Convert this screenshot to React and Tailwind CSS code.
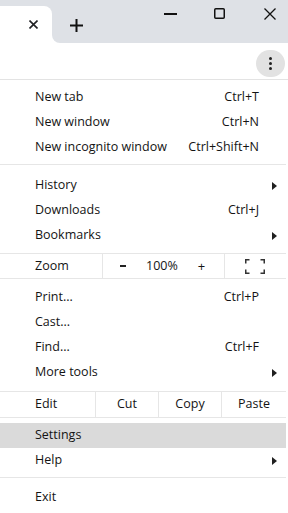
import React from "react";

const Arrow = () => (
  <svg width="5" height="8" viewBox="0 0 5 8" className="fill-[#202020]">
    <path d="M0 0 L5 4 L0 8 Z" />
  </svg>
);

const Row = ({ label, shortcut, arrow, active }) => (
  <div
    className={`flex h-[25px] items-center pl-[35px] pr-[27px] ${
      active ? "bg-[#dadada]" : ""
    }`}
  >
    <span className="flex-1">{label}</span>
    {shortcut && <span>{shortcut}</span>}
    {arrow && (
      <span className="-mr-[18px] flex items-center">
        <Arrow />
      </span>
    )}
  </div>
);

const Sep = ({ last }) => (
  <div className={`${last ? "mb-[7px]" : "mb-[8px]"} mt-[4px] h-px bg-[#e6e6e6]`} />
);

const App = () => {
  return (
    <div
      className="h-[513px] w-[288px] overflow-hidden bg-white text-[12.5px] text-[#141414]"
      style={{ fontFamily: '"Segoe UI", "Open Sans", sans-serif' }}
    >
      {/* tab strip */}
      <div className="flex h-[43px] bg-white">
        <div className="flex w-[52px] flex-col bg-[#dee1e6] pt-[6px]">
          <div className="flex flex-1 items-center justify-end rounded-tr-[8px] bg-white pr-[14px]">
            <svg width="9" height="9" viewBox="0 0 9 9" className="stroke-[#202124]" strokeWidth="1.6">
              <path d="M0.5 0.5 L8.5 8.5 M8.5 0.5 L0.5 8.5" />
            </svg>
          </div>
        </div>
        <div className="flex flex-1 rounded-bl-[8px] bg-[#dee1e6]">
          <div className="flex w-[48px] items-center justify-center pt-[7px]">
            <svg width="13" height="13" viewBox="0 0 13 13" className="stroke-[#111]" strokeWidth="2">
              <path d="M6.5 0 V13 M0 6.5 H13" />
            </svg>
          </div>
          <div className="flex flex-1 items-start justify-end pr-[12px] pt-[8px]">
            <div className="flex h-[11px] items-center">
              <svg width="13" height="2" viewBox="0 0 13 2" className="fill-[#111]">
                <rect width="13" height="2" />
              </svg>
            </div>
            <div className="ml-[37px] flex h-[11px] items-center">
              <svg width="11" height="11" viewBox="0 0 11 11" className="fill-none stroke-[#111]" strokeWidth="1.5">
                <rect x="0.75" y="0.75" width="9.5" height="9.5" rx="1" />
              </svg>
            </div>
            <div className="ml-[39px] flex h-[11px] items-center">
              <svg width="12" height="12" viewBox="0 0 12 12" className="stroke-[#111]" strokeWidth="1.3">
                <path d="M0.5 0.5 L11.5 11.5 M11.5 0.5 L0.5 11.5" />
              </svg>
            </div>
          </div>
        </div>
      </div>

      {/* toolbar */}
      <div className="flex h-[37px] items-center justify-end border-b border-[#e3e3e3] pr-[3px]">
        <div className="mt-[4px] flex h-[27px] w-[29px] flex-col items-center justify-center gap-[2px] rounded-full bg-[#e2e2e2]">
          <span className="h-[3px] w-[3px] rounded-full bg-[#222]" />
          <span className="h-[3px] w-[3px] rounded-full bg-[#222]" />
          <span className="h-[3px] w-[3px] rounded-full bg-[#222]" />
        </div>
      </div>

      {/* menu */}
      <div className="w-[286px] pt-[5px]">
        <Row label="New tab" shortcut="Ctrl+T" />
        <Row label="New window" shortcut="Ctrl+N" />
        <Row label="New incognito window" shortcut="Ctrl+Shift+N" />
        <Sep />
        <Row label="History" arrow />
        <Row label="Downloads" shortcut="Ctrl+J" />
        <Row label="Bookmarks" arrow />

        <div className="mt-[5px] flex h-[26px] items-stretch border-y border-[#e6e6e6]">
          <div className="flex w-[103px] items-center border-r border-[#e6e6e6] pl-[35px]">Zoom</div>
          <div className="flex w-[122px] items-center border-r border-[#e6e6e6]">
            <span className="ml-[17px] h-[2px] w-[6px] bg-[#222]" />
            <span className="ml-[20px]">100%</span>
            <span className="ml-[20px] text-[13px] leading-none">+</span>
          </div>
          <div className="flex flex-1 items-center justify-center pr-[2px]">
            <svg width="20" height="15" viewBox="0 0 20 15" className="fill-none stroke-[#333]" strokeWidth="1.5">
              <path d="M0.75 4.5 V0.75 H4.5 M15.5 0.75 H19.25 V4.5 M19.25 10.5 V14.25 H15.5 M4.5 14.25 H0.75 V10.5" />
            </svg>
          </div>
        </div>

        <div className="mt-[6px]">
          <Row label="Print..." shortcut="Ctrl+P" />
          <Row label="Cast..." />
          <Row label="Find..." shortcut="Ctrl+F" />
          <Row label="More tools" arrow />
        </div>

        <div className="mt-[6px] flex h-[27px] items-stretch border-y border-[#e6e6e6]">
          <div className="flex w-[96px] items-center border-r border-[#e6e6e6] pl-[35px]">Edit</div>
          <div className="flex w-[63px] items-center justify-center border-r border-[#e6e6e6]">Cut</div>
          <div className="flex w-[63px] items-center justify-center border-r border-[#e6e6e6]">Copy</div>
          <div className="flex flex-1 items-center justify-center">Paste</div>
        </div>

        <div className="mt-[5px]">
          <Row label="Settings" active />
          <Row label="Help" arrow />
        </div>
        <Sep last />
        <Row label="Exit" />
      </div>
    </div>
  );
};

export default App;
